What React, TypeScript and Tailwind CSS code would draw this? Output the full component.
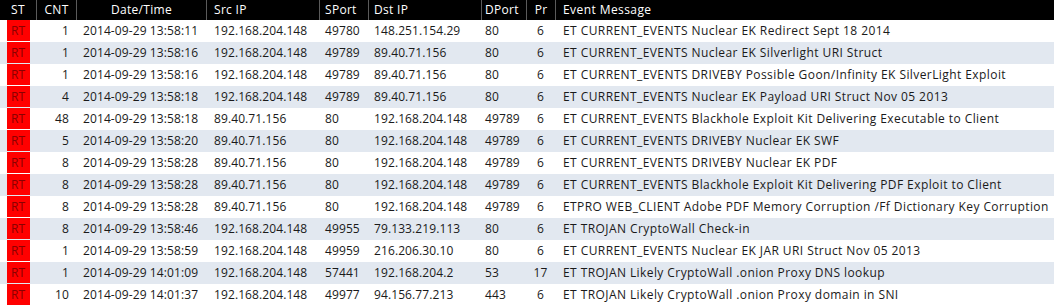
import React from "react";

type Row = [string, string, string, string, string, string, string, string];

const rows: Row[] = [
  ["1", "2014-09-29 13:58:11", "192.168.204.148", "49780", "148.251.154.29", "80", "6", "ET CURRENT_EVENTS Nuclear EK Redirect Sept 18 2014"],
  ["1", "2014-09-29 13:58:16", "192.168.204.148", "49789", "89.40.71.156", "80", "6", "ET CURRENT_EVENTS Nuclear EK Silverlight URI Struct"],
  ["1", "2014-09-29 13:58:16", "192.168.204.148", "49789", "89.40.71.156", "80", "6", "ET CURRENT_EVENTS DRIVEBY Possible Goon/Infinity EK SilverLight Exploit"],
  ["4", "2014-09-29 13:58:18", "192.168.204.148", "49789", "89.40.71.156", "80", "6", "ET CURRENT_EVENTS Nuclear EK Payload URI Struct Nov 05 2013"],
  ["48", "2014-09-29 13:58:18", "89.40.71.156", "80", "192.168.204.148", "49789", "6", "ET CURRENT_EVENTS Blackhole Exploit Kit Delivering Executable to Client"],
  ["5", "2014-09-29 13:58:20", "89.40.71.156", "80", "192.168.204.148", "49789", "6", "ET CURRENT_EVENTS DRIVEBY Nuclear EK SWF"],
  ["8", "2014-09-29 13:58:28", "89.40.71.156", "80", "192.168.204.148", "49789", "6", "ET CURRENT_EVENTS DRIVEBY Nuclear EK PDF"],
  ["8", "2014-09-29 13:58:28", "89.40.71.156", "80", "192.168.204.148", "49789", "6", "ET CURRENT_EVENTS Blackhole Exploit Kit Delivering PDF Exploit to Client"],
  ["8", "2014-09-29 13:58:28", "89.40.71.156", "80", "192.168.204.148", "49789", "6", "ETPRO WEB_CLIENT Adobe PDF Memory Corruption /Ff Dictionary Key Corruption"],
  ["8", "2014-09-29 13:58:46", "192.168.204.148", "49955", "79.133.219.113", "80", "6", "ET TROJAN CryptoWall Check-in"],
  ["1", "2014-09-29 13:58:59", "192.168.204.148", "49959", "216.206.30.10", "80", "6", "ET CURRENT_EVENTS Nuclear EK JAR URI Struct Nov 05 2013"],
  ["1", "2014-09-29 14:01:09", "192.168.204.148", "57441", "192.168.204.2", "53", "17", "ET TROJAN Likely CryptoWall .onion Proxy DNS lookup"],
  ["10", "2014-09-29 14:01:37", "192.168.204.148", "49977", "94.156.77.213", "443", "6", "ET TROJAN Likely CryptoWall .onion Proxy domain in SNI"],
];

const grid =
  "grid grid-cols-[36px_40px_130px_113px_49px_113px_45px_29px_1fr]";

export default function App() {
  return (
    <div
      className="w-[1054px] h-[306px] overflow-hidden bg-white text-[12px] tracking-[0.1px] text-[#1a1a1a]"
      style={{ fontFamily: '"Open Sans", "Noto Sans", sans-serif' }}
    >
      <div className={`${grid} h-[20px] bg-black text-white leading-[20px] tracking-[0.3px]`}>
        <div className="text-center">ST</div>
        <div className="text-center border-l border-[#5a5a5a]">CNT</div>
        <div className="text-center border-l border-[#5a5a5a]">Date/Time</div>
        <div className="pl-[7px] border-l border-[#5a5a5a]">Src IP</div>
        <div className="pl-[5px] border-l border-[#5a5a5a]">SPort</div>
        <div className="pl-[5px] border-l border-[#5a5a5a]">Dst IP</div>
        <div className="pl-[3px] border-l border-[#5a5a5a]">DPort</div>
        <div className="text-center border-l border-[#5a5a5a]">Pr</div>
        <div className="pl-[7px] border-l border-[#5a5a5a] tracking-[0.42px]">Event Message</div>
      </div>
      {rows.map((r, i) => (
        <div
          key={i}
          className={`${grid} h-[22px] leading-[21px] ${
            i % 2 === 1 ? "bg-[#e2e8f0]" : "bg-white"
          }`}
        >
          <div className="flex justify-center">
            <div className="w-[23px] h-[21px] bg-[#ff0000] text-[#8a0000] text-center">
              RT
            </div>
          </div>
          <div className="text-right pr-[7px]">{r[0]}</div>
          <div className="pl-[7px] whitespace-nowrap">{r[1]}</div>
          <div className="pl-[8px] whitespace-nowrap">{r[2]}</div>
          <div className="pl-[6px]">{r[3]}</div>
          <div className="pl-[6px] whitespace-nowrap">{r[4]}</div>
          <div className="pl-[4px]">{r[5]}</div>
          <div className="text-center">{r[6]}</div>
          <div className="pl-[8px] whitespace-nowrap overflow-hidden tracking-[0.42px]">{r[7]}</div>
        </div>
      ))}
    </div>
  );
}
